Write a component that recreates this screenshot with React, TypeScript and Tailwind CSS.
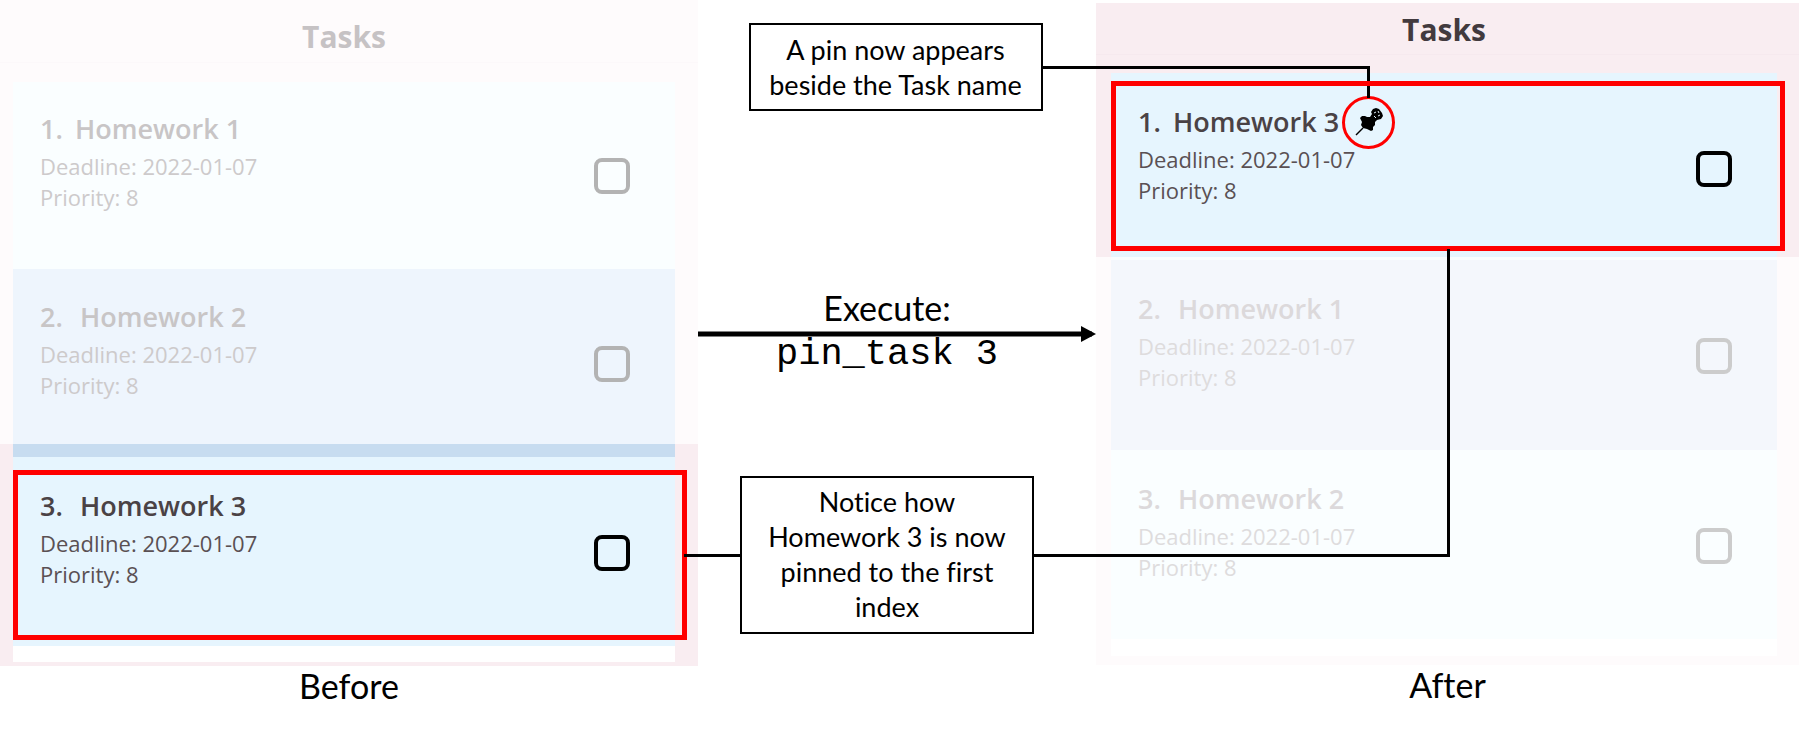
import type { ReactNode } from "react";

type Tone = "normal" | "faded" | "fainter";

const titleTone: Record<Tone, string> = {
  normal: "text-[#4a4245]",
  faded: "text-[#c8c5c6]",
  fainter: "text-[#dcd9db]",
};
const bodyTone: Record<Tone, string> = {
  normal: "text-[#5a5053]",
  faded: "text-[#cdcacb]",
  fainter: "text-[#dedcdd]",
};
const boxTone: Record<Tone, string> = {
  normal: "border-black",
  faded: "border-[#b3b3b3]",
  fainter: "border-[#cccccc]",
};

function Pin() {
  return (
    <svg viewBox="0 0 28 28" className="size-7" aria-label="Pinned" role="img">
      <path d="M1 27 L8 20" stroke="#000" strokeWidth="1.5" fill="none" />
      <path
        d="M5 10 L7 8 L10 8 L12 9 L15 9 L17 6 L16 4 L18 1 L21 0 L24 1 L27 5 L28 8 L26 11 L22 12 L20 14 L20 17 L18 19 L18 22 L16 23 L12 21 L8 20 L6 17 L7 14 Z"
        fill="#000"
      />
      <path d="M19 5 L21 4 M19 8 L21 10 M23 3 L24 5 M23 8 L25 7" stroke="#e6f5fe" strokeWidth="1" fill="none" />
    </svg>
  );
}

function Task(props: {
  id: string;
  index: number;
  name: string;
  tone: Tone;
  className: string;
  pinned?: ReactNode;
  children?: ReactNode;
}) {
  const { id, index, name, tone, className, pinned, children } = props;
  return (
    <li className={`relative flex items-start justify-between pl-[27px] pr-[45px] ${className}`}>
      <div>
        <label
          htmlFor={id}
          className={`flex items-center text-[27px] leading-[36px] font-semibold ${titleTone[tone]}`}
        >
          <span className={index === 1 ? "w-[35px]" : "w-10"}>{index}.</span>
          {name}
          {pinned}
        </label>
        <p className={`mt-1 text-[22px] leading-[31px] ${bodyTone[tone]}`}>Deadline: 2022-01-07</p>
        <p className={`text-[22px] leading-[31px] ${bodyTone[tone]}`}>Priority: 8</p>
      </div>
      <input
        id={id}
        type="checkbox"
        className={`mt-[47px] size-9 appearance-none rounded-lg border-4 ${boxTone[tone]}`}
      />
      {children}
    </li>
  );
}

function Callout({ children }: { children: ReactNode }) {
  return (
    <p className="w-[294px] border-2 border-black bg-white text-center text-[27px] leading-[35px]">
      {children}
    </p>
  );
}

export default function App() {
  return (
    <main className="min-h-[732px] bg-white font-['Lato',sans-serif] text-black [font-variant-ligatures:none]">
      <div className="grid grid-cols-[698fr_398fr_703fr]">
        <figure>
          <section className="bg-[linear-gradient(#fefbfc_444px,#f9edf1_444px)] pb-1 font-['Open_Sans','Noto_Sans',sans-serif]">
            <h2 className="mb-[19px] h-[63px] border-b border-[#fcf8fa] pt-[17px] pr-[10px] text-center text-[30px] leading-[40px] font-bold text-[#c6c2c4]">
              Tasks
            </h2>
            <ul className="mr-[23px] ml-[13px] bg-white pb-4">
              <Task id="b1" index={1} name="Homework 1" tone="faded" className="h-[187px] bg-[#fafeff] pt-[29px]" />
              <Task
                id="b2"
                index={2}
                name="Homework 2"
                tone="faded"
                className="h-[188px] bg-[linear-gradient(#eef5fd_175px,#c7dcf0_175px)] pt-[30px]"
              />
              <Task id="b3" index={3} name="Homework 3" tone="normal" className="h-[189px] bg-[#e6f5fe] pt-[31px]">
                <div className="absolute top-[13px] -right-3 left-0 h-[170px] border-5 border-[#ff0000]">
                  <div className="absolute top-[79px] -right-[59px] h-[3px] w-[57px] bg-black" />
                </div>
              </Task>
            </ul>
          </section>
          <figcaption className="text-center text-[34px] leading-[40px]">Before</figcaption>
        </figure>

        <div className="flex flex-col items-center pt-[23px]">
          <div className="mr-[3px]">
            <Callout>
              <span className="block py-[7px]">
                A pin now appears
                <br />
                beside the Task name
              </span>
            </Callout>
          </div>
          <div className="mt-[178px] w-full text-center">
            <p className="mr-5 text-[34px] leading-[37px]">Execute:</p>
            <svg className="block h-4 w-full" aria-hidden="true">
              <line x1="0" y1="8" x2="99%" y2="8" stroke="#000" strokeWidth="5" />
              <svg x="100%" overflow="visible">
                <path d="M-15 0 L0 8 L-15 16 Z" />
              </svg>
            </svg>
            <p className="-mt-2 mr-5 font-['Liberation_Mono',monospace] text-[37px] leading-[40px]">pin_task 3</p>
          </div>
          <div className="mt-[102px] mr-5">
            <Callout>
              <span className="block px-4 pt-[6px] pb-2">
                Notice how
                <br />
                Homework 3 is now
                <br />
                pinned to the first
                <br />
                index
              </span>
            </Callout>
          </div>
        </div>

        <figure className="pt-[3px]">
          <section className="bg-[linear-gradient(#f9edf1_254px,#fefbfc_254px)] pb-[9px] font-['Open_Sans','Noto_Sans',sans-serif]">
            <h2 className="mb-[18px] h-[52px] border-b border-[#f6e9ee] pt-[7px] pr-[7px] text-center text-[30px] leading-[40px] font-bold text-[#423a3e]">
              Tasks
            </h2>
            <ul className="mr-[22px] ml-[15px] bg-white pb-[17px]">
              <Task
                id="a1"
                index={1}
                name="Homework 3"
                tone="normal"
                className="h-[187px] bg-[linear-gradient(#e6f5fe_184px,#fafeff_184px)] pt-[31px]"
                pinned={
                  <span className="relative -my-3 ml-[3px] flex size-[53px] items-center justify-center rounded-full border-3 border-[#ff0000]">
                    <Pin />
                    <span className="absolute right-[22px] bottom-[48px] h-[32px] w-[328px] border-t-3 border-r-3 border-black" />
                  </span>
                }
              >
                <div className="absolute top-2 -right-2 left-0 h-[170px] border-5 border-[#ff0000]" />
                <div className="absolute top-[176px] -left-[77px] z-10 h-[308px] w-[416px] border-r-3 border-b-3 border-black" />
              </Task>
              <Task id="a2" index={2} name="Homework 1" tone="fainter" className="h-[190px] bg-[#f4f7fc] pt-[31px]" />
              <Task id="a3" index={3} name="Homework 2" tone="fainter" className="h-[189px] bg-[#fafeff] pt-[31px]" />
            </ul>
          </section>
          <figcaption className="text-center text-[34px] leading-[40px]">After</figcaption>
        </figure>
      </div>
    </main>
  );
}
